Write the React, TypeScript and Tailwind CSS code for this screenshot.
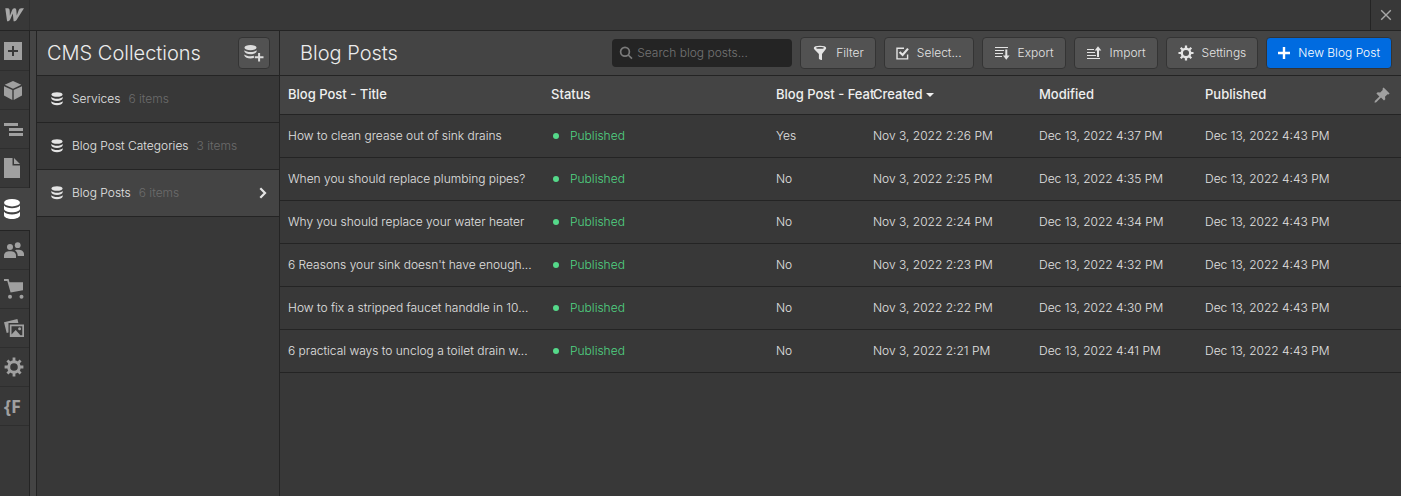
import React from 'react';
import { clsx } from 'clsx';

interface IconProps {
  className?: string;
}

const WebflowIcon = ({ className }: IconProps) => (
  <svg viewBox="0 0 20 14" fill="currentColor" className={className} aria-hidden="true">
    <path d="M20 0h-2.800c-1.500 0-2.400 1-2.800 2.100l-2 5.500S12 2.500 11.900 2C11.700.6 11.200 0 9.900 0 8.700 0 7.900.9 7.400 2L5.200 7.600S5 2.700 4.900 2.200C4.700.6 3.900 0 2.500 0H.3l1.900 13.700c1.900 0 2.900-1 3.500-2.500l2.500-5.700c.1.700.9 8.200.9 8.200 1.900 0 3-1.100 3.700-2.600z" />
  </svg>
);

const AddIcon = ({ className }: IconProps) => (
  <svg viewBox="0 0 18 18" fill="currentColor" className={className} aria-hidden="true">
    <path fillRule="evenodd" d="M0 0h18v18H0zM8 4v4H4v2h4v4h2v-4h4V8h-4V4z" />
  </svg>
);

const CubeIcon = ({ className }: IconProps) => (
  <svg viewBox="0 0 18 19" fill="currentColor" className={className} aria-hidden="true">
    <path d="M9 0l8.300 3.800L9 7.700.7 3.800zM0 5.200l8.300 3.900V19L0 14.600zM18 5.200v9.400L9.700 19V9.100z" />
  </svg>
);

const NavigatorIcon = ({ className }: IconProps) => (
  <svg viewBox="0 0 19 13" fill="currentColor" className={className} aria-hidden="true">
    <path d="M0 0h14v3H0zM5 5h14v3H5zM5 10h14v3H5z" />
  </svg>
);

const PageIcon = ({ className }: IconProps) => (
  <svg viewBox="0 0 16 20" fill="currentColor" className={className} aria-hidden="true">
    <path d="M0 0h8.500v7.500H16V20H0zM10 0l6 6h-6z" />
  </svg>
);

const DatabaseIcon = ({ className }: IconProps) => (
  <svg viewBox="0 0 16 20" fill="currentColor" className={className} aria-hidden="true">
    <ellipse cx="8" cy="3.700" rx="8" ry="3.700" />
    <path d="M0 6.500c1.400 1.700 4.500 2.700 8 2.700s6.600-1 8-2.700v3.300c0 2-3.600 3.500-8 3.500S0 11.800 0 9.800z" />
    <path d="M0 12.800c1.400 1.700 4.500 2.700 8 2.700s6.600-1 8-2.700v3.500c0 2.100-3.600 3.700-8 3.700s-8-1.600-8-3.700z" />
  </svg>
);

const SmallDatabaseIcon = ({ className }: IconProps) => (
  <svg viewBox="0 0 12 14" fill="currentColor" className={className} aria-hidden="true">
    <ellipse cx="6" cy="2.500" rx="5.500" ry="2.300" />
    <path d="M.3 5c1.200 1.200 3.300 1.800 5.700 1.800S10.500 6.200 11.700 5v1.300C11.200 8 8.900 9 6 9S.8 8 .3 6.300z" />
    <path d="M.3 9.300C1.500 10.500 3.600 11.100 6 11.100s4.500-.6 5.700-1.800v1.300c-.5 1.700-2.800 2.700-5.700 2.700S.8 12.300.3 10.600z" />
  </svg>
);

const AddCollectionIcon = ({ className }: IconProps) => (
  <svg viewBox="0 0 20 17" fill="currentColor" className={className} aria-hidden="true">
    <ellipse cx="6.500" cy="2.700" rx="6" ry="2.600" />
    <path d="M.4 5.300c1.300 1.200 3.500 1.800 6.100 1.800s4.800-.6 6.100-1.800v1.300c-.6 1.600-3.100 2.700-6.100 2.700S1 8.200.4 6.600z" />
    <path d="M.4 9.400c1.300 1.200 3.500 1.800 6.100 1.800 1.200 0 2.400-.2 3.400-.4v2.100c-1 .3-2.100.5-3.400.5-3 0-5.500-1.100-6.100-2.700z" />
    <path d="M14.100 8h2v3.300h3.400v2h-3.400v3.300h-2v-3.300h-3.300v-2h3.300z" />
  </svg>
);

const UsersIcon = ({ className }: IconProps) => (
  <svg viewBox="0 0 20 16" fill="currentColor" className={className} aria-hidden="true">
    <circle cx="6" cy="5" r="3" />
    <circle cx="13.700" cy="3.200" r="2.900" />
    <path d="M0 16v-2.500C0 10.800 2.300 9.300 6 9.300s6 1.500 6 4.200V16z" />
    <path d="M11 8.200c.8-.4 1.700-.5 2.700-.5 3.700 0 6.300 1.500 6.300 4.200v2h-6.300c0-2.500-.8-4.300-2.700-5.700z" />
  </svg>
);

const CartIcon = ({ className }: IconProps) => (
  <svg viewBox="0 0 20 20" fill="currentColor" className={className} aria-hidden="true">
    <path d="M0 0h4.600l.9 3.200H19v8L6.600 13.500 3.300 2H0z" />
    <circle cx="6" cy="17.700" r="2" />
    <circle cx="17.500" cy="17.700" r="2" />
  </svg>
);

const AssetsIcon = ({ className }: IconProps) => (
  <svg viewBox="0 0 20 18" fill="currentColor" className={className} aria-hidden="true">
    <path d="M0 3.300L13.400 0l1 4H4.500v9.500L2.700 14z" />
    <path fillRule="evenodd" d="M5.800 5.500H20V18H5.800zM7.500 7.200v8.200l4.200-4.500 4.700 5.300h1.900v-9z" />
    <circle cx="15.600" cy="9.700" r="1.500" />
  </svg>
);

const GearIcon = ({ className }: IconProps) => (
  <svg viewBox="0 0 20 20" className={className} aria-hidden="true">
    <circle cx="10" cy="10" r="5.300" fill="none" stroke="currentColor" strokeWidth="3" />
    <path
      d="M10 .6v4M10 15.400v4M.6 10h4M15.400 10h4M3.400 3.400l2.800 2.800M13.800 13.800l2.800 2.800M16.600 3.400l-2.800 2.800M6.200 13.800l-2.800 2.800"
      stroke="currentColor"
      strokeWidth="2.800"
    />
  </svg>
);

const ChevronIcon = ({ className }: IconProps) => (
  <svg viewBox="0 0 8 12" fill="none" stroke="currentColor" strokeWidth="2.200" className={className} aria-hidden="true">
    <path d="M1.300 1.300L6 6l-4.700 4.700" />
  </svg>
);

const CloseIcon = ({ className }: IconProps) => (
  <svg viewBox="0 0 12 12" fill="none" stroke="currentColor" strokeWidth="1.400" className={className} aria-hidden="true">
    <path d="M1.200 1.200l9.600 9.600M10.800 1.200l-9.600 9.600" />
  </svg>
);

const SearchIcon = ({ className }: IconProps) => (
  <svg viewBox="0 0 14 14" fill="none" stroke="currentColor" strokeWidth="1.700" className={className} aria-hidden="true">
    <circle cx="6" cy="5.800" r="4.400" />
    <path d="M9.200 9l3.800 3.700" />
  </svg>
);

const FilterIcon = ({ className }: IconProps) => (
  <svg viewBox="0 0 14 16" fill="currentColor" className={className} aria-hidden="true">
    <path fillRule="evenodd" d="M7 .8c3.700 0 6.200.9 6.200 2.100 0 .5-.3 1-.7 1.500L9 8.900v5.500c0 .5-.4.800-.9.600l-1.700-.8c-.3-.2-.5-.4-.5-.8V8.900L1.500 4.400C1.100 3.900.8 3.400.8 2.900.8 1.700 3.300.8 7 .8zM7 2C4.700 2 3 2.400 3 2.900s1.700.9 4 .9 4-.4 4-.9S9.300 2 7 2z" />
  </svg>
);

const SelectIcon = ({ className }: IconProps) => (
  <svg viewBox="0 0 13 13" fill="none" stroke="currentColor" className={className} aria-hidden="true">
    <path d="M8 1.300H1v10.600h10.600V7.500" strokeWidth="1.400" />
    <path d="M3.600 5l3 3L12 1.600" strokeWidth="2.200" />
  </svg>
);

const ExportIcon = ({ className }: IconProps) => (
  <svg viewBox="0 0 16 14" fill="none" stroke="currentColor" className={className} aria-hidden="true">
    <path d="M1 1.500h13M1 4.500h9M1 7.500h8M1 10.500h7" strokeWidth="1.200" />
    <path d="M12.300 3.500v7.500" strokeWidth="2" />
    <path d="M9 9.500h6.600L12.300 13.700z" fill="currentColor" stroke="none" />
  </svg>
);

const ImportIcon = ({ className }: IconProps) => (
  <svg viewBox="0 0 16 14" fill="none" stroke="currentColor" className={className} aria-hidden="true">
    <path d="M1 3.500h7M1 6.500h8M1 9.500h9M1 12.500h13" strokeWidth="1.200" />
    <path d="M12 3v8" strokeWidth="2" />
    <path d="M8.700 4.500h6.600L12 .3z" fill="currentColor" stroke="none" />
  </svg>
);

const PlusIcon = ({ className }: IconProps) => (
  <svg viewBox="0 0 10 10" fill="none" stroke="currentColor" strokeWidth="2" className={className} aria-hidden="true">
    <path d="M5 0v10M0 5h10" />
  </svg>
);

const PinIcon = ({ className }: IconProps) => (
  <svg viewBox="0 0 16 16" fill="currentColor" className={className} aria-hidden="true">
    <path d="M9.600.4l6 6-1.100 1-1-.1-2.500 2.500.3 2.500-1.300 1.300-3-3-4.700 4.700L.6 15.700l.2-1.700 4.600-4.500-3-3L3.700 5.200l2.500.3L8.700 3l-.1-1.500z" />
  </svg>
);

const sidebarItems = [
  { label: 'Add', icon: <AddIcon className="w-[18px] h-[18px]" /> },
  { label: 'Components', icon: <CubeIcon className="w-[18px] h-[19px]" /> },
  { label: 'Navigator', icon: <NavigatorIcon className="w-[19px] h-[13px]" /> },
  { label: 'Pages', icon: <PageIcon className="w-4 h-5" /> },
  { label: 'CMS', icon: <DatabaseIcon className="w-4 h-5" />, active: true },
  { label: 'Users', icon: <UsersIcon className="w-5 h-4" /> },
  { label: 'Ecommerce', icon: <CartIcon className="w-5 h-5" /> },
  { label: 'Assets', icon: <AssetsIcon className="w-5 h-[18px]" /> },
  { label: 'Settings', icon: <GearIcon className="w-5 h-5" /> },
  { label: 'Extension', icon: <span className="font-['Open_Sans',sans-serif] text-lg font-bold">{'{F'}</span> },
];

const collections = [
  { name: 'Services', count: '6 items' },
  { name: 'Blog Post Categories', count: '3 items' },
  { name: 'Blog Posts', count: '6 items', active: true },
];

const posts = [
  { title: 'How to clean grease out of sink drains', featured: 'Yes', created: 'Nov 3, 2022 2:26 PM', modified: 'Dec 13, 2022 4:37 PM' },
  { title: 'When you should replace plumbing pipes?', featured: 'No', created: 'Nov 3, 2022 2:25 PM', modified: 'Dec 13, 2022 4:35 PM' },
  { title: 'Why you should replace your water heater', featured: 'No', created: 'Nov 3, 2022 2:24 PM', modified: 'Dec 13, 2022 4:34 PM' },
  { title: "6 Reasons your sink doesn't have enough...", featured: 'No', created: 'Nov 3, 2022 2:23 PM', modified: 'Dec 13, 2022 4:32 PM' },
  { title: 'How to fix a stripped faucet handdle in 10...', featured: 'No', created: 'Nov 3, 2022 2:22 PM', modified: 'Dec 13, 2022 4:30 PM' },
  { title: '6 practical ways to unclog a toilet drain w...', featured: 'No', created: 'Nov 3, 2022 2:21 PM', modified: 'Dec 13, 2022 4:41 PM' },
];

interface ToolbarButtonProps {
  icon: React.ReactNode;
  label: string;
  primary?: boolean;
}

const ToolbarButton: React.FC<ToolbarButtonProps> = ({ icon, label, primary }) => (
  <button
    type="button"
    className={clsx(
      'flex h-8 shrink-0 items-center gap-2 whitespace-nowrap rounded-sm border border-[#343434] px-[11px] text-xs',
      primary ? 'bg-[#006be0] text-white' : 'bg-[#525252] text-[#e4e4e4]',
    )}
  >
    {icon}
    {label}
  </button>
);

const Sidebar = () => (
  <nav className="flex w-[30px] shrink-0 flex-col pt-px shadow-[inset_-1px_0_#242424]">
    {sidebarItems.map((item) => (
      <button
        key={item.label}
        type="button"
        aria-label={item.label}
        className={clsx(
          'flex shrink-0 items-center border-b pl-1',
          item.active ? 'h-[43px] border-[#242424] bg-[#444444] text-white' : 'mr-px h-[39px] border-[#2e2e2e] text-[#a0a0a0]',
        )}
      >
        {item.icon}
      </button>
    ))}
  </nav>
);

const CollectionsPanel = () => (
  <aside className="flex w-[244px] shrink-0 flex-col border-x border-[#242424]">
    <div className="flex h-[45px] items-center justify-between border-b border-[#242424] bg-[#444444] pl-[10px] pr-[9px]">
      <h2 className="text-xl font-light text-[#ececec]">CMS Collections</h2>
      <button
        type="button"
        aria-label="Add collection"
        className="flex h-8 w-8 items-center justify-center rounded-sm border border-[#343434] bg-[#525252] text-[#dcdcdc]"
      >
        <AddCollectionIcon className="w-5 h-[17px]" />
      </button>
    </div>
    {collections.map((collection) => (
      <a
        key={collection.name}
        href="#"
        className={clsx('flex h-[47px] items-center border-b border-[#242424] pl-[14px] pr-3 text-xs text-[#e4e4e4]', collection.active && 'bg-[#444444]')}
      >
        <SmallDatabaseIcon className="mr-[9px] w-3 h-[14px]" />
        <span>{collection.name}</span>
        <span className="ml-2 text-[#6c6c6c]">{collection.count}</span>
        {collection.active && <ChevronIcon className="ml-auto h-3 w-2" />}
      </a>
    ))}
  </aside>
);

const PostsTable = () => (
  <table className="w-full table-fixed border-collapse whitespace-nowrap text-left text-xs text-[#e2e2e2]">
    <thead className="bg-[#444444] text-[13px] text-[#efefef]">
      <tr className="h-[38px] border-b border-[#242424]">
        <th className="w-[271px] pl-2 font-medium">Blog Post - Title</th>
        <th className="w-[225px] font-medium">Status</th>
        <th className="w-[97px] font-medium">Blog Post - Feat</th>
        <th className="w-[166px] font-medium">
          <button type="button" className="flex items-center gap-1 font-medium">
            Created
            <svg viewBox="0 0 8 4" fill="currentColor" className="h-1 w-2" aria-hidden="true">
              <path d="M0 0h8L4 4z" />
            </svg>
          </button>
        </th>
        <th className="w-[166px] font-medium">Modified</th>
        <th className="font-medium">
          <div className="flex items-center justify-between pr-[11px]">
            Published
            <button type="button" aria-label="Pin columns" className="text-[#a0a0a0]">
              <PinIcon className="h-4 w-4" />
            </button>
          </div>
        </th>
      </tr>
    </thead>
    <tbody>
      {posts.map((post) => (
        <tr key={post.title} className="h-[43px] border-b border-[#242424]">
          <td className="pl-2">{post.title}</td>
          <td>
            <span className="flex items-center gap-[11px] pl-[2px] text-[#50d482]">
              <span className="h-[6px] w-[6px] rounded-full bg-[#55d98a]" />
              Published
            </span>
          </td>
          <td>{post.featured}</td>
          <td>{post.created}</td>
          <td>{post.modified}</td>
          <td>Dec 13, 2022 4:43 PM</td>
        </tr>
      ))}
    </tbody>
  </table>
);

export default function App() {
  return (
    <div className="flex min-h-screen flex-col bg-[#383838] font-[Inter,sans-serif] font-light text-[#e2e2e2]">
      <header className="flex h-[31px] items-stretch justify-between border-b border-[#242424]">
        <a href="#" aria-label="Webflow" className="flex w-[30px] items-center border-r border-[#303030] pl-[5px] text-[#a8a8a8]">
          <WebflowIcon className="h-[14px] w-[19px]" />
        </a>
        <button type="button" aria-label="Close" className="flex w-[31px] items-center justify-center border-l border-[#242424] text-[#a8a8a8]">
          <CloseIcon className="h-3 w-3" />
        </button>
      </header>
      <div className="flex flex-1">
        <Sidebar />
        <div className="w-[6px] shrink-0 bg-[#444444]" />
        <CollectionsPanel />
        <main className="min-w-0 flex-1">
          <div className="flex h-[45px] items-center gap-2 border-b border-[#242424] bg-[#444444] pl-5 pr-[9px]">
            <h1 className="mr-auto whitespace-nowrap text-xl font-light text-[#ececec]">Blog Posts</h1>
            <label className="flex h-7 w-[180px] items-center gap-1 rounded-sm bg-[#242424] px-[7px] text-[#7a7a7a]">
              <SearchIcon className="h-[14px] w-[14px] shrink-0" />
              <input
                type="text"
                aria-label="Search blog posts"
                placeholder="Search blog posts..."
                className="w-full min-w-0 bg-transparent text-xs outline-none placeholder:text-[#747474]"
              />
            </label>
            <ToolbarButton icon={<FilterIcon className="h-4 w-4" />} label="Filter" />
            <ToolbarButton icon={<SelectIcon className="h-[13px] w-[13px]" />} label="Select..." />
            <ToolbarButton icon={<ExportIcon className="h-[14px] w-4" />} label="Export" />
            <ToolbarButton icon={<ImportIcon className="h-[14px] w-4" />} label="Import" />
            <ToolbarButton icon={<GearIcon className="h-4 w-4" />} label="Settings" />
            <ToolbarButton icon={<PlusIcon className="h-3 w-3" />} label="New Blog Post" primary />
          </div>
          <PostsTable />
        </main>
      </div>
    </div>
  );
}
